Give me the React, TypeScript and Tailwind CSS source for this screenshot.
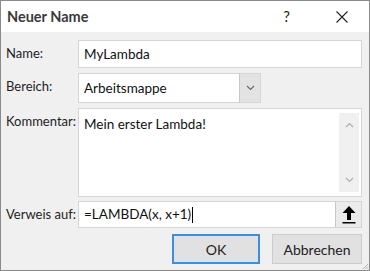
const ChevronDown = ({ className }: { className?: string }) => (
  <svg width="9" height="6" viewBox="0 0 9 6" className={className}>
    <path d="M1 1 L4.5 4.5 L8 1" fill="none" stroke="currentColor" strokeWidth="1.2" />
  </svg>
);

const ChevronUp = ({ className }: { className?: string }) => (
  <svg width="9" height="6" viewBox="0 0 9 6" className={className}>
    <path d="M1 5 L4.5 1.5 L8 5" fill="none" stroke="currentColor" strokeWidth="1.2" />
  </svg>
);

const Label = ({ children }: { children: React.ReactNode }) => (
  <div className="w-[77px] shrink-0 pl-[5px] pt-[5px] whitespace-nowrap text-[13px] leading-[16px] text-[#1e1e1e]">{children}</div>
);

export default function App() {
  return (
    <div className="relative w-[370px] h-[271px] border border-[#8a8a8a] bg-[#f0f0f0] flex flex-col font-['Lato',sans-serif] text-[#111]">
      <div className="h-[31px] bg-white flex items-center pl-[6px] shrink-0">
        <span className="font-bold text-[14.5px] text-[#3a3a3a]">Neuer Name</span>
        <span className="ml-auto mr-[46px] text-[15px] text-[#222]">?</span>
        <svg width="12" height="12" viewBox="0 0 12 12" className="mr-[21px] text-[#222]">
          <path d="M0.5 0.5 L11.5 11.5 M11.5 0.5 L0.5 11.5" stroke="currentColor" strokeWidth="1.1" />
        </svg>
      </div>

      <div className="flex-1 flex flex-col pt-[8px] pr-[7px] gap-[5px]">
        <div className="flex">
          <Label>Name:</Label>
          <div className="flex-1 h-[28px] bg-white border border-[#d5d5d5] flex items-center pl-[5px] text-[13.5px]">MyLambda</div>
        </div>

        <div className="flex">
          <Label>Bereich:</Label>
          <div className="w-[183px] h-[30px] bg-white border border-[#d5d5d5] flex">
            <div className="flex-1 flex items-center pl-[5px] text-[13.5px]">Arbeitsmappe</div>
            <div className="w-[21px] bg-[#e3e3e3] border-l border-[#c6c6c6] flex items-center justify-center text-[#6a6a6a]">
              <ChevronDown />
            </div>
          </div>
        </div>

        <div className="flex">
          <Label>Kommentar:</Label>
          <div className="flex-1 h-[89px] bg-white border border-[#d5d5d5] flex">
            <div className="flex-1 pl-[5px] pt-[6px] text-[13.5px] leading-[18px]">Mein erster Lambda!</div>
            <div className="w-[20px] my-[4px] mr-[2px] bg-[#f0f0f0] flex flex-col items-center justify-between py-[9px] text-[#b0b0b0]">
              <ChevronUp />
              <ChevronDown />
            </div>
          </div>
        </div>

        <div className="flex -mt-[1px]">
          <Label>Verweis auf:</Label>
          <div className="flex-1 h-[27px] bg-white border border-[#d5d5d5] flex">
            <div className="flex-1 flex items-center pl-[5px] text-[13.5px]">
              =LAMBDA(x, x+1)<span className="inline-block w-px h-[16px] bg-black ml-px" />
            </div>
            <div className="w-[26px] bg-[#ebebeb] border-l border-[#c6c6c6] flex items-center justify-center">
              <svg width="16" height="19" viewBox="0 0 16 19">
                <path d="M8 1 L14.5 8 L10 8 L10 15 L6 15 L6 8 L1.5 8 Z" fill="#000" />
                <rect x="1.5" y="17" width="13" height="1.5" fill="#000" />
              </svg>
            </div>
          </div>
        </div>

        <div className="flex justify-end gap-[12px] mt-[1px]">
          <button className="w-[88px] h-[30px] bg-[#e1e1e1] border-2 border-[#3d8ee0] text-[14px] text-[#222]">OK</button>
          <button className="w-[90px] h-[30px] bg-[#e1e1e1] border border-[#cccccc] text-[14px] text-[#222]">Abbrechen</button>
        </div>
      </div>

      <svg width="7" height="7" viewBox="0 0 7 7" className="absolute right-0 bottom-0 text-[#b5b5b5]">
        <path d="M6 1 L1 6 M6 3.5 L3.5 6 M6 5.5 L5.5 6" stroke="currentColor" strokeWidth="1" />
      </svg>
    </div>
  );
}
